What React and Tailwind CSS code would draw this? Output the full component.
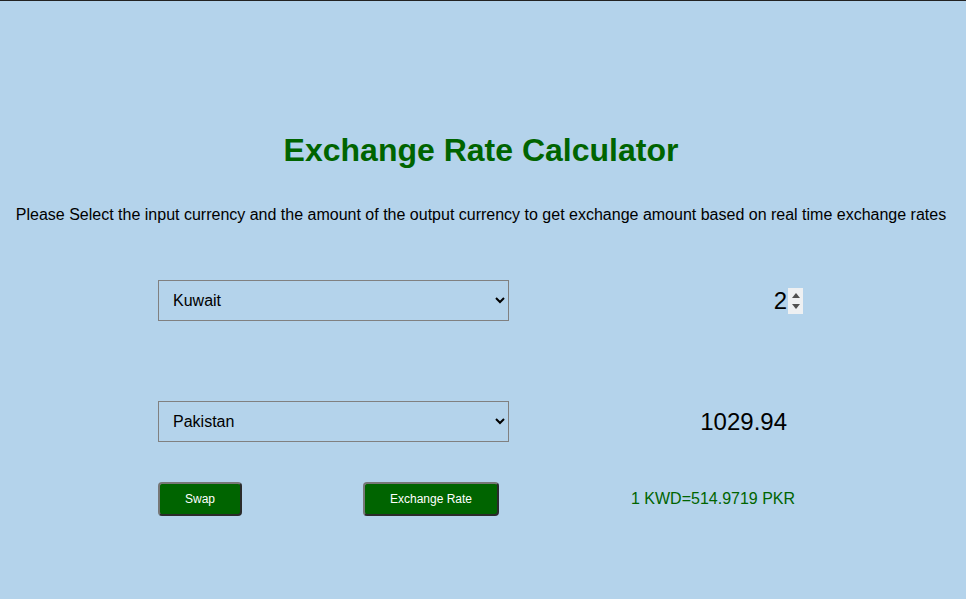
import React, { useState } from 'react';

const countries = ['Kuwait', 'Pakistan', 'United States', 'United Kingdom', 'India', 'Japan'];

// Fake number spinner, drawn the way Chrome shows it on hover
function Spinner() {
  return (
    <div className="flex h-[26px] w-[15px] flex-col items-center justify-between bg-[#eef0f2] py-[5px]">
      <svg width="8" height="5" viewBox="0 0 8 5"><path d="M4 0 L8 5 L0 5 Z" fill="#505050" /></svg>
      <svg width="8" height="5" viewBox="0 0 8 5"><path d="M0 0 L8 0 L4 5 Z" fill="#505050" /></svg>
    </div>
  );
}

export default function App() {
  const [from, setFrom] = useState('Kuwait');
  const [to, setTo] = useState('Pakistan');
  const [amount, setAmount] = useState(2);

  return (
    <div className="min-h-[599px] w-full bg-[#b4d3eb] border-t border-[#222222] text-black font-['Liberation_Sans',Arial,sans-serif]">
      <h1 className="pt-[131px] pr-1 text-center text-[32px] font-bold leading-[37px] text-[#006400]">
        Exchange Rate Calculator
      </h1>
      <p className="mt-[37px] pr-1 text-center text-base leading-[18px]">
        Please Select the input currency and the amount of the output currency to get exchange amount based on real time exchange rates
      </p>

      {/* Row 1: input currency + amount */}
      <div className="mt-[56px] flex items-center pl-[158px]">
        <select
          value={from}
          onChange={(e) => setFrom(e.target.value)}
          className="w-[351px] h-[41px] border border-[#808080] bg-transparent pl-[10px] pr-2 text-base outline-none"
        >
          {countries.map((c) => <option key={c}>{c}</option>)}
        </select>
        <div className="flex w-[294px] items-center justify-end">
          <input
            type="number"
            value={amount}
            onChange={(e) => setAmount(e.target.value)}
            className="mr-px w-[40px] bg-transparent text-right text-2xl outline-none [appearance:textfield] [&::-webkit-inner-spin-button]:appearance-none [&::-webkit-outer-spin-button]:appearance-none"
          />
          <Spinner />
        </div>
      </div>

      {/* Row 2: output currency + result */}
      <div className="mt-[80px] flex items-center pl-[158px]">
        <select
          value={to}
          onChange={(e) => setTo(e.target.value)}
          className="w-[351px] h-[41px] border border-[#808080] bg-transparent pl-[10px] pr-2 text-base outline-none"
        >
          {countries.map((c) => <option key={c}>{c}</option>)}
        </select>
        <div className="w-[278px] text-right text-2xl">1029.94</div>
      </div>

      {/* Row 3: actions + rate */}
      <div className="mt-[40px] flex items-center pl-[158px]">
        <button className="h-[34px] w-[84px] rounded-[4px] border-2 border-t-[#777777] border-l-[#777777] border-r-[#2b2b2b] border-b-[#2b2b2b] bg-[#006400] text-xs text-white">
          Swap
        </button>
        <button className="ml-[121px] h-[34px] w-[136px] rounded-[4px] border-2 border-t-[#777777] border-l-[#777777] border-r-[#2b2b2b] border-b-[#2b2b2b] bg-[#006400] text-xs text-white">
          Exchange Rate
        </button>
        <div className="ml-[132px] text-base text-[#006400]">1 KWD=514.9719 PKR</div>
      </div>
    </div>
  );
}
